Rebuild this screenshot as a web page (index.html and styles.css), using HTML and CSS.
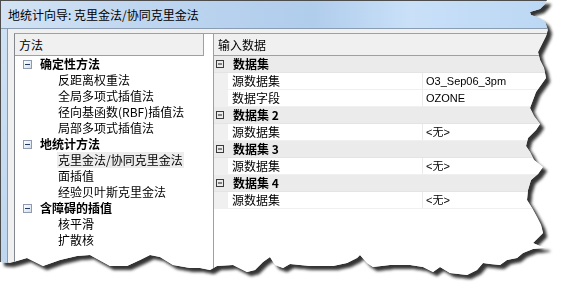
FILE: index.html
```html
<!DOCTYPE html>
<html>
<head>
<meta charset="utf-8">
<link rel="stylesheet" href="styles.css">
</head>
<body>
<div class="shot">
  <div class="window">
    <div class="titlebar">地统计向导: 克里金法/协同克里金法</div>
    <div class="main">
      <div class="frame"></div>
      <div class="client">
        <div class="left-panel">
          <div class="left-header">方法</div>
          <ul class="tree">
            <li class="group"><svg class="exp" width="9" height="9" viewBox="0 0 9 9"><defs><linearGradient id="g1" x1="0" y1="0" x2="1" y2="1"><stop offset="0" stop-color="#ffffff"/><stop offset="1" stop-color="#d6dde6"/></linearGradient></defs><rect x="0.5" y="0.5" width="8" height="8" fill="url(#g1)" stroke="#8c9bb0"/><rect x="2" y="4" width="5" height="1" fill="#1d3a66"/></svg><span>确定性方法</span></li>
            <li class="leaf">反距离权重法</li>
            <li class="leaf">全局多项式插值法</li>
            <li class="leaf">径向基函数(RBF)插值法</li>
            <li class="leaf">局部多项式插值法</li>
            <li class="group"><svg class="exp" width="9" height="9" viewBox="0 0 9 9"><rect x="0.5" y="0.5" width="8" height="8" fill="url(#g1)" stroke="#8c9bb0"/><rect x="2" y="4" width="5" height="1" fill="#1d3a66"/></svg><span>地统计方法</span></li>
            <li class="leaf"><span class="sel">克里金法/协同克里金法</span></li>
            <li class="leaf">面插值</li>
            <li class="leaf">经验贝叶斯克里金法</li>
            <li class="group"><svg class="exp" width="9" height="9" viewBox="0 0 9 9"><rect x="0.5" y="0.5" width="8" height="8" fill="url(#g1)" stroke="#8c9bb0"/><rect x="2" y="4" width="5" height="1" fill="#1d3a66"/></svg><span>含障碍的插值</span></li>
            <li class="leaf">核平滑</li>
            <li class="leaf">扩散核</li>
          </ul>
        </div>
        <div class="right-panel">
          <div class="right-header">输入数据</div>
          <div class="grid">
            <div class="row cat"><svg class="pexp" width="8" height="8" viewBox="0 0 8 8"><rect x="0.5" y="0.5" width="7" height="7" fill="none" stroke="#3a3a3a"/><rect x="2" y="3.5" width="4" height="1" fill="#1a1a1a"/></svg><span>数据集</span></div>
            <div class="row prop"><div class="margin"></div><div class="name">源数据集</div><div class="val">O3_Sep06_3pm</div></div>
            <div class="row prop"><div class="margin"></div><div class="name">数据字段</div><div class="val">OZONE</div></div>
            <div class="row cat"><svg class="pexp" width="8" height="8" viewBox="0 0 8 8"><rect x="0.5" y="0.5" width="7" height="7" fill="none" stroke="#3a3a3a"/><rect x="2" y="3.5" width="4" height="1" fill="#1a1a1a"/></svg><span>数据集 2</span></div>
            <div class="row prop"><div class="margin"></div><div class="name">源数据集</div><div class="val">&lt;无&gt;</div></div>
            <div class="row cat"><svg class="pexp" width="8" height="8" viewBox="0 0 8 8"><rect x="0.5" y="0.5" width="7" height="7" fill="none" stroke="#3a3a3a"/><rect x="2" y="3.5" width="4" height="1" fill="#1a1a1a"/></svg><span>数据集 3</span></div>
            <div class="row prop"><div class="margin"></div><div class="name">源数据集</div><div class="val">&lt;无&gt;</div></div>
            <div class="row cat"><svg class="pexp" width="8" height="8" viewBox="0 0 8 8"><rect x="0.5" y="0.5" width="7" height="7" fill="none" stroke="#3a3a3a"/><rect x="2" y="3.5" width="4" height="1" fill="#1a1a1a"/></svg><span>数据集 4</span></div>
            <div class="row prop"><div class="margin"></div><div class="name">源数据集</div><div class="val">&lt;无&gt;</div></div>
          </div>
        </div>
      </div>
    </div>
  </div>
</div>
</body>
</html>
```
FILE: styles.css
```css
html, body {
  margin: 0;
  padding: 0;
  background: #ffffff;
}
body {
  font-family: "Noto Sans CJK SC", sans-serif;
  font-size: 12px;
  color: #000;
}
.shot {
  width: 568px;
  height: 297px;
  filter: drop-shadow(4px 4px 1.5px rgba(0, 0, 0, 0.8));
}
.window {
  width: 568px;
  height: 297px;
  box-sizing: border-box;
  border-top: 1px solid #4d4d4d;
  border-left: 1px solid #4d4d4d;
  background: #f0f0f0;
  display: flex;
  flex-direction: column;
  clip-path: polygon(0 0, 547px 0, 545px 4px, 540px 9px, 530px 12px, 531px 15px, 540px 18px, 545px 22px, 548px 30px, 546px 36px, 542px 44px, 538px 52px, 540px 60px, 544px 68px, 546px 78px, 541px 85px, 536px 92px, 533px 100px, 530px 108px, 534px 116px, 540px 124px, 536px 130px, 528px 138px, 526px 146px, 530px 152px, 534px 160px, 543px 167px, 538px 174px, 531px 180px, 528px 190px, 527px 200px, 532px 208px, 537px 217px, 541px 225px, 543px 233px, 536px 240px, 533px 243px, 540px 246px, 547px 247px, 543px 248px, 533px 249px, 523px 253px, 517px 258px, 507px 260px, 500px 265px, 490px 264px, 483px 263px, 477px 270px, 467px 275px, 450px 273px, 440px 267px, 433px 272px, 423px 267px, 410px 265px, 390px 265px, 373px 267px, 367px 263px, 360px 255px, 357px 258px, 347px 263px, 333px 266px, 310px 266px, 290px 264px, 283px 268px, 275px 265px, 270px 257px, 263px 262px, 255px 270px, 247px 272px, 233px 265px, 217px 266px, 210px 270px, 200px 268px, 190px 268px, 173px 265px, 160px 257px, 150px 255px, 140px 260px, 127px 266px, 110px 266px, 90px 255px, 77px 256px, 60px 260px, 43px 266px, 27px 258px, 10px 263px, 0 262px);
}
.titlebar {
  height: 27px;
  line-height: 28px;
  padding-left: 7px;
  border-bottom: 1px solid #8b9db3;
  background: linear-gradient(to right, #d3e3f4 0%, #bfd6f0 25%, #b0cdec 55%, #c9e0f8 72%, #bad6f3 100%);
  white-space: nowrap;
}
.main {
  flex: 1;
  display: flex;
  min-height: 0;
}
.frame {
  width: 6px;
  background: linear-gradient(to bottom, #cfe1f4, #bcd5ef);
  border-right: 1px solid #8a9cb0;
}
.client {
  flex: 1;
  display: flex;
  padding: 4px 0 0 6px;
  min-width: 0;
}
.left-panel {
  width: 198px;
  background: #ffffff;
  border-left: 1px solid #828790;
  border-top: 1px solid #a0a0a0;
}
.left-header {
  width: 184px;
  height: 21px;
  line-height: 21px;
  padding-left: 4px;
  background: #f0f0f0;
  border-right: 1px solid #a0a0a0;
  border-bottom: 1px solid #a0a0a0;
}
.tree {
  list-style: none;
  margin: 0;
  padding: 0;
}
.tree li {
  height: 16px;
  line-height: 16px;
  white-space: nowrap;
}
.tree .group {
  display: flex;
  align-items: center;
  padding-left: 8px;
  gap: 8px;
  font-weight: bold;
}
.tree .exp {
  display: block;
  flex: none;
}
.tree .leaf {
  padding-left: 43px;
}
.tree .sel {
  background: #ededed;
  margin-left: -1px;
  padding: 0 1px;
  display: inline-block;
  height: 16px;
}
.right-panel {
  flex: 1;
  background: #ffffff;
  border-left: 1px solid #a0a0a0;
  min-width: 0;
}
.right-header {
  height: 21px;
  line-height: 21px;
  padding-left: 4px;
  background: #f0f0f0;
  border-top: 1px solid #a0a0a0;
  border-bottom: 1px solid #a0a0a0;
}
.grid {
  display: flex;
  flex-direction: column;
}
.row {
  height: 16px;
  line-height: 16px;
  border-bottom: 1px solid #f0f0f0;
  display: flex;
  white-space: nowrap;
}
.row.cat {
  background: #ebebeb;
  align-items: center;
  padding-left: 2px;
  gap: 9px;
  font-weight: bold;
  border-bottom-color: #e4e4e4;
}
.pexp {
  display: block;
  flex: none;
}
.row.prop .margin {
  width: 14px;
  background: #f0f0f0;
  flex: none;
}
.row.prop .name {
  width: 190px;
  padding-left: 4px;
  border-right: 1px solid #eaeaea;
  flex: none;
}
.row.prop .val {
  flex: 1;
  padding-left: 3px;
  font-family: "Liberation Sans", "Noto Sans CJK SC", sans-serif;
  font-size: 11px;
}
```
